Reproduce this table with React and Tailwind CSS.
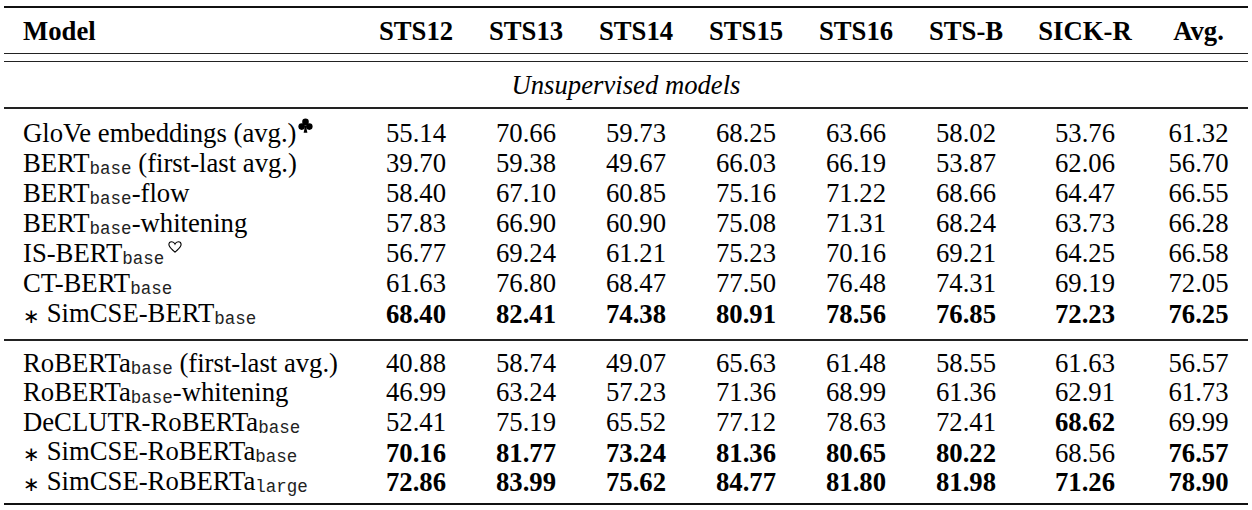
import React from "react";

const COLS = "grid grid-cols-[357px_110px_110px_110px_110px_110px_110px_128px_99px]";

function Sub({ children }) {
  return (
    <span className="font-['Liberation_Mono',monospace] text-[17.5px] leading-none align-[-2px] text-[#222]">
      {children}
    </span>
  );
}

function Club() {
  return (
    <svg width="15" height="15" viewBox="0 0 15 15" className="inline-block align-[9px] ml-[2px]">
      <circle cx="7.5" cy="3.9" r="3.3" fill="#000" />
      <circle cx="3.7" cy="8.6" r="3.3" fill="#000" />
      <circle cx="11.3" cy="8.6" r="3.3" fill="#000" />
      <path d="M7.5 6 L5.6 14.8 L9.4 14.8 Z" fill="#000" />
    </svg>
  );
}

function Heart() {
  return (
    <svg width="14" height="12" viewBox="0 0 14 12" className="inline-block align-[9px] ml-[4px]">
      <path
        d="M7 11.2 C4.2 8.4 0.9 6.4 0.9 3.6 C0.9 1.8 2.2 0.7 3.7 0.7 C5.2 0.7 6.4 1.7 7 3.1 C7.6 1.7 8.8 0.7 10.3 0.7 C11.8 0.7 13.1 1.8 13.1 3.6 C13.1 6.4 9.8 8.4 7 11.2 Z"
        fill="none"
        stroke="#000"
        strokeWidth="1.1"
      />
    </svg>
  );
}

function Ast() {
  return <span className="font-['DejaVu_Sans',sans-serif] text-[20px] align-[-1px] mr-[7px]">∗</span>;
}

const group1 = [
  { name: <>GloVe embeddings (avg.)<Club /></>, v: ["55.14", "70.66", "59.73", "68.25", "63.66", "58.02", "53.76", "61.32"], b: [] },
  { name: <>BERT<Sub>base</Sub> (first-last avg.)</>, v: ["39.70", "59.38", "49.67", "66.03", "66.19", "53.87", "62.06", "56.70"], b: [] },
  { name: <>BERT<Sub>base</Sub>-flow</>, v: ["58.40", "67.10", "60.85", "75.16", "71.22", "68.66", "64.47", "66.55"], b: [] },
  { name: <>BERT<Sub>base</Sub>-whitening</>, v: ["57.83", "66.90", "60.90", "75.08", "71.31", "68.24", "63.73", "66.28"], b: [] },
  { name: <>IS-BERT<Sub>base</Sub><Heart /></>, v: ["56.77", "69.24", "61.21", "75.23", "70.16", "69.21", "64.25", "66.58"], b: [] },
  { name: <>CT-BERT<Sub>base</Sub></>, v: ["61.63", "76.80", "68.47", "77.50", "76.48", "74.31", "69.19", "72.05"], b: [] },
  { name: <><Ast />SimCSE-BERT<Sub>base</Sub></>, v: ["68.40", "82.41", "74.38", "80.91", "78.56", "76.85", "72.23", "76.25"], b: [0, 1, 2, 3, 4, 5, 6, 7] },
];

const group2 = [
  { name: <>RoBERTa<Sub>base</Sub> (first-last avg.)</>, v: ["40.88", "58.74", "49.07", "65.63", "61.48", "58.55", "61.63", "56.57"], b: [] },
  { name: <>RoBERTa<Sub>base</Sub>-whitening</>, v: ["46.99", "63.24", "57.23", "71.36", "68.99", "61.36", "62.91", "61.73"], b: [] },
  { name: <>DeCLUTR-RoBERTa<Sub>base</Sub></>, v: ["52.41", "75.19", "65.52", "77.12", "78.63", "72.41", "68.62", "69.99"], b: [6] },
  { name: <><Ast />SimCSE-RoBERTa<Sub>base</Sub></>, v: ["70.16", "81.77", "73.24", "81.36", "80.65", "80.22", "68.56", "76.57"], b: [0, 1, 2, 3, 4, 5, 7] },
  { name: <><Ast />SimCSE-RoBERTa<Sub>large</Sub></>, v: ["72.86", "83.99", "75.62", "84.77", "81.80", "81.98", "71.26", "78.90"], b: [0, 1, 2, 3, 4, 5, 6, 7] },
];

function Row({ r, h }) {
  return (
    <div className={`${COLS} ${h} items-center`}>
      <div className="pl-[19px] whitespace-nowrap">{r.name}</div>
      {r.v.map((x, i) => (
        <div key={i} className={`text-center ${r.b.includes(i) ? "font-bold" : ""}`}>
          {x}
        </div>
      ))}
    </div>
  );
}

export default function App() {
  const heads = ["STS12", "STS13", "STS14", "STS15", "STS16", "STS-B", "SICK-R", "Avg."];
  return (
    <div className="w-[1252px] h-[510px] bg-white text-black font-['Liberation_Serif','DejaVu_Serif',serif] text-[26.7px] leading-[30px] pt-[6px] px-[4px] overflow-hidden">
      <div className="h-[2px] bg-[#111]" />
      <div className={`${COLS} h-[45px] items-center font-bold`}>
        <div className="pl-[19px]">Model</div>
        {heads.map((h) => (
          <div key={h} className="text-center">{h}</div>
        ))}
      </div>
      <div className="h-[1.3px] bg-[#222]" />
      <div className="h-[6.7px]" />
      <div className="h-[1.3px] bg-[#222]" />
      <div className="h-[44.7px] flex items-center justify-center italic">Unsupervised models</div>
      <div className="h-[1.6px] bg-[#222]" />
      <div className="pt-[9px] pb-[11px]">
        {group1.map((r, i) => (
          <Row key={i} r={r} h="h-[30px]" />
        ))}
      </div>
      <div className="h-[2px] bg-[#222]" />
      <div className="pt-[7px] pb-[7px]">
        {group2.map((r, i) => (
          <Row key={i} r={r} h="h-[29.6px]" />
        ))}
      </div>
      <div className="h-[2px] bg-[#111]" />
    </div>
  );
}
